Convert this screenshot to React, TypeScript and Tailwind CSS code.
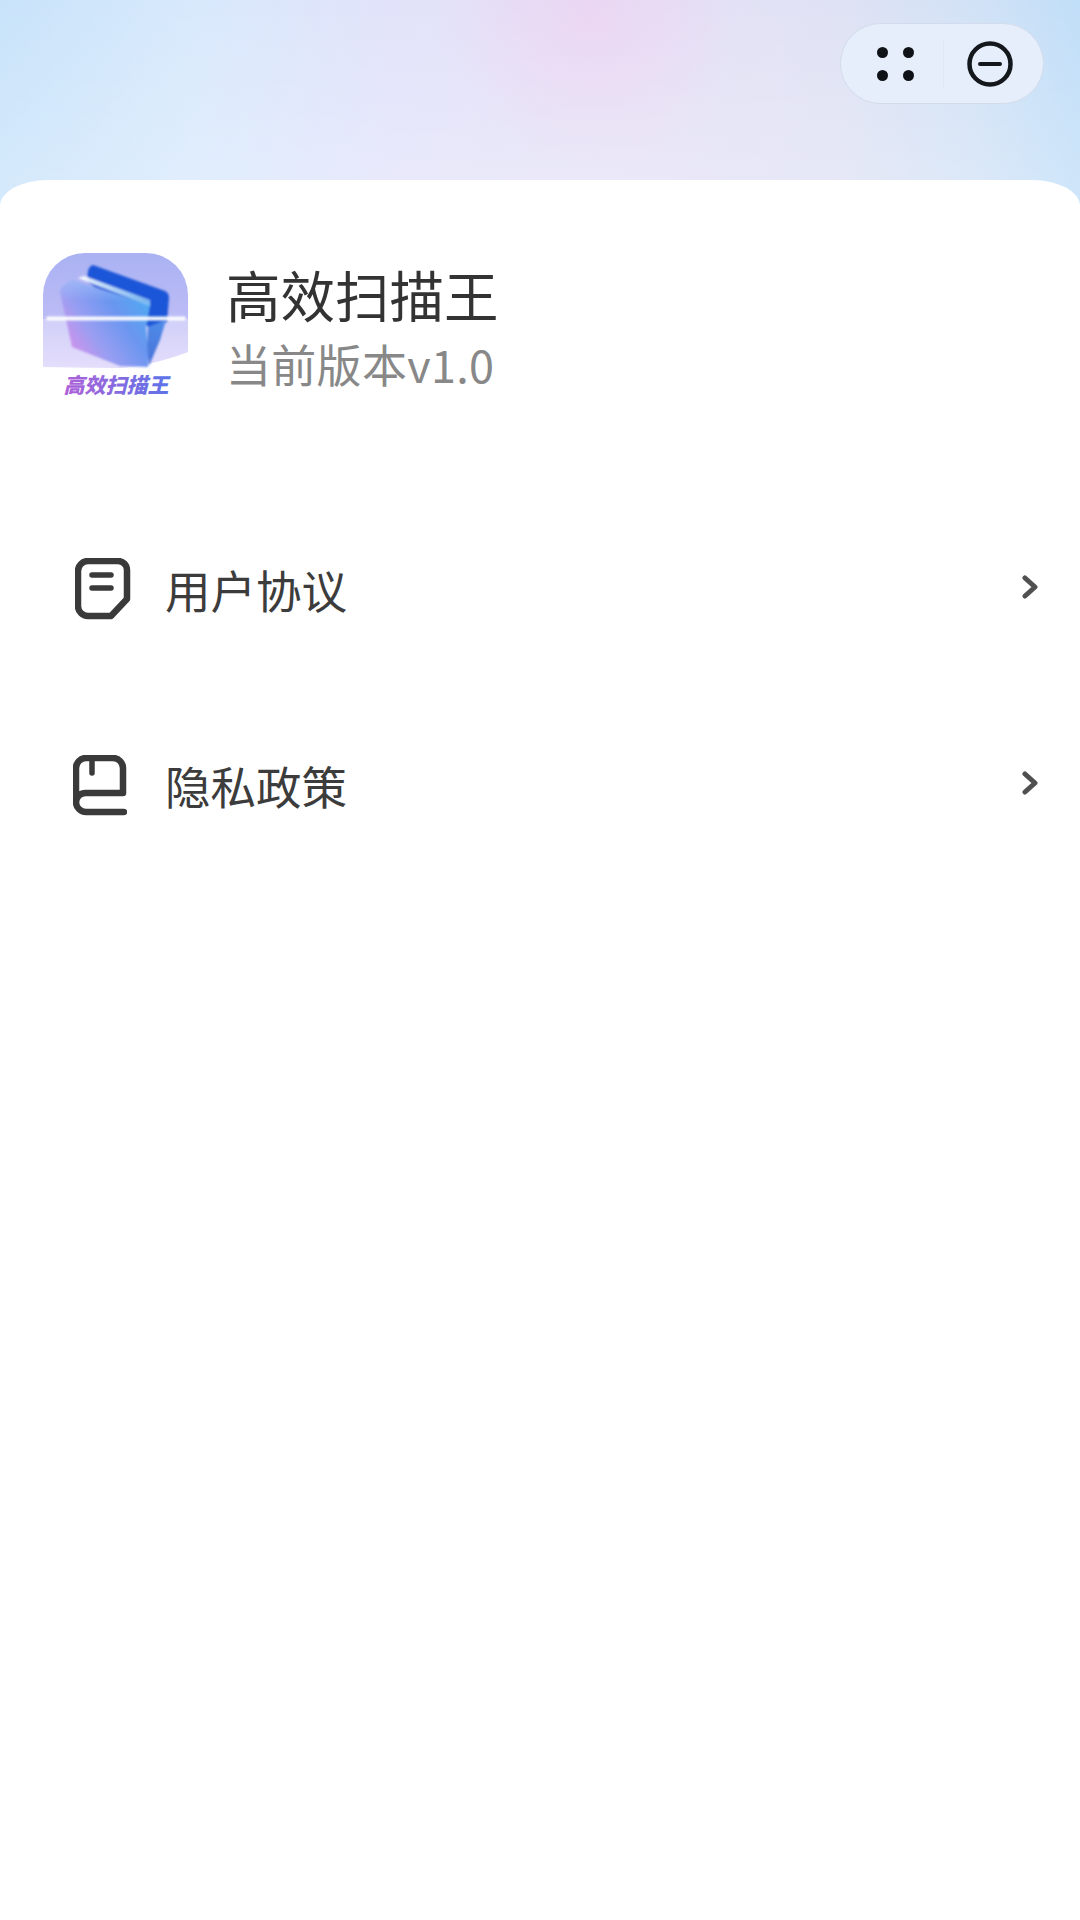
import React from 'react';

const AppLogo: React.FC = () => (
  <svg width="146" height="150" viewBox="43 253 146 150" className="shrink-0">
    <defs>
      <linearGradient id="logoBg" x1="0" y1="0" x2="0" y2="1">
        <stop offset="0" stopColor="#aab2f3" />
        <stop offset="0.6" stopColor="#bdbcf6" />
        <stop offset="1" stopColor="#d9d0fa" />
      </linearGradient>
      <linearGradient id="logoSheet" x1="0.05" y1="0.85" x2="0.95" y2="0.25">
        <stop offset="0" stopColor="#e08fea" />
        <stop offset="0.35" stopColor="#9a9ef2" />
        <stop offset="0.7" stopColor="#6a96f0" />
        <stop offset="1" stopColor="#52a8f2" />
      </linearGradient>
      <linearGradient id="logoSheetTop" x1="0" y1="0" x2="0" y2="1">
        <stop offset="0" stopColor="#a4bcf8" stopOpacity="0.85" />
        <stop offset="0.5" stopColor="#a4bcf8" stopOpacity="0" />
      </linearGradient>
      <linearGradient id="logoFlap" x1="0" y1="0" x2="0" y2="1">
        <stop offset="0" stopColor="#4f8ce8" />
        <stop offset="1" stopColor="#4a72d8" />
      </linearGradient>
      <linearGradient id="logoShine" x1="0" y1="0" x2="1" y2="0">
        <stop offset="0" stopColor="#ffffff" stopOpacity="0.95" />
        <stop offset="1" stopColor="#9fdcfb" stopOpacity="0.7" />
      </linearGradient>
      <linearGradient id="logoText" x1="0" y1="0" x2="1" y2="0">
        <stop offset="0" stopColor="#b061d8" />
        <stop offset="1" stopColor="#5b74e8" />
      </linearGradient>
      <filter id="soft" x="-10%" y="-10%" width="120%" height="120%">
        <feGaussianBlur stdDeviation="0.8" />
      </filter>
      <filter id="glow" x="-10%" y="-300%" width="120%" height="700%">
        <feGaussianBlur stdDeviation="1.2" />
      </filter>
    </defs>
    <path d="M43 367 V295 A42 42 0 0 1 85 253 H146 A42 42 0 0 1 188 295 V352 Q150 366 120 368 Z" fill="url(#logoBg)" />
    <path d="M43 319 H188 V352 Q150 366 120 368 L43 367 Z" fill="#ffffff" fillOpacity="0.3" />
    <g filter="url(#soft)">
      <path d="M93 265 L165 291 Q169 293 169 298 L167 322 L150 328 L88 282 Q86 267 93 265 Z" fill="#1f56d8" />
      <path d="M60 292 Q60 288 66 284 L72 280 L150 305 L146 328 L148 350 L148 367 L120 366 L72 347 Z" fill="url(#logoSheet)" />
      <path d="M60 292 Q60 288 66 284 L72 280 L150 305 L148 322 L66 316 Z" fill="url(#logoSheetTop)" />
      <path d="M78 278 L84 276 L150 300 L150 306 Z" fill="url(#logoShine)" />
      <path d="M148 327 L166 320 L160 340 L149 366 L147 346 Z" fill="url(#logoFlap)" />
    </g>
    <rect x="46" y="316.5" width="140" height="4" rx="2" fill="#ffffff" fillOpacity="0.95" filter="url(#glow)" />
    <text x="116" y="393" textAnchor="middle" fontSize="21" fontWeight="900" fontStyle="italic" fill="url(#logoText)" fontFamily="'Noto Sans CJK SC', sans-serif">
      高效扫描王
    </text>
  </svg>
);

const AgreementIcon: React.FC = () => (
  <svg width="56" height="62" viewBox="0 0 56 62" fill="none" stroke="#3a3a3a" strokeWidth="6.5" strokeLinecap="round" strokeLinejoin="round">
    <path d="M13 3 H43 A9 9 0 0 1 52 12 V41 L36 58 H13 A10 10 0 0 1 3 48 V13 A10 10 0 0 1 13 3 Z" />
    <path d="M17 17 H36 M17 30 H36" strokeWidth="5.5" />
  </svg>
);

const PrivacyIcon: React.FC = () => (
  <svg width="54" height="61" viewBox="0 0 54 61" fill="none" stroke="#3a3a3a" strokeWidth="6.5" strokeLinecap="round" strokeLinejoin="round" className="-ml-[2px]">
    <path d="M51 57 H13 A10 10 0 0 1 3 47 V13 A10 10 0 0 1 13 3 H40 A10 10 0 0 1 50 13 V38 H13 A9.5 9.5 0 0 0 3 47" />
    <path d="M19 3 V18" strokeWidth="5.5" />
  </svg>
);

const Chevron: React.FC = () => (
  <svg width="16" height="24" viewBox="0 0 16 24" fill="none" stroke="#505050" strokeWidth="5" strokeLinecap="round" strokeLinejoin="round" className="mb-[5px]">
    <path d="M3 3 L13 12 L3 21" />
  </svg>
);

const MENU_ITEMS = [
  { label: '用户协议', icon: <AgreementIcon /> },
  { label: '隐私政策', icon: <PrivacyIcon /> },
];

const App: React.FC = () => {
  return (
    <div className="relative w-[1080px] h-[1920px] overflow-hidden bg-white font-['Noto_Sans_CJK_SC','Noto_Sans',sans-serif]">
      {/* Capsule header */}
      <div className="h-[240px] pt-[23px] pr-[36px] flex justify-end items-start bg-[linear-gradient(180deg,rgba(255,255,255,0)_0%,rgba(255,255,255,0.22)_75%),radial-gradient(ellipse_150px_150px_at_590px_20px,#ebd6f2_0%,rgba(235,214,242,0)_100%),linear-gradient(90deg,#c8e3fa_0%,#d8e9fc_18%,#e2e3fa_36%,#e5e1f6_60%,#dfe2f4_78%,#d2e2f6_90%,#c0def8_100%)]">
        <div className="w-[204px] h-[81px] rounded-full bg-[#e5eefa] border border-[#d3dcec] flex items-center">
          <div className="w-[102px] flex justify-end pr-[28px]">
            <svg width="38" height="34" viewBox="0 0 38 34" fill="#0f1217">
              <circle cx="5.5" cy="5.5" r="5.5" />
              <circle cx="31.5" cy="5.5" r="5.5" />
              <circle cx="5.5" cy="28.5" r="5.5" />
              <circle cx="31.5" cy="28.5" r="5.5" />
            </svg>
          </div>
          <div className="w-px h-[50px] bg-[#dfe8f5]" />
          <div className="flex-1 flex justify-start pl-[23px]">
            <svg width="46" height="46" viewBox="0 0 46 46" fill="none" stroke="#14181d" strokeLinecap="round">
              <circle cx="23" cy="23" r="20.5" strokeWidth="4.5" />
              <path d="M13 23 H33" strokeWidth="4" />
            </svg>
          </div>
        </div>
      </div>

      {/* Card */}
      <div className="relative -mt-[60px] h-[1740px] bg-white rounded-t-[48px_26px] pt-[73px]">
        <div className="flex items-start pl-[43px] gap-[37px]">
          <AppLogo />
          <div className="flex flex-col gap-[10px] pt-[10px]">
            <div className="text-[54.5px] leading-[62px] text-[#333333]">高效扫描王</div>
            <div className="text-[45px] leading-[58px] tracking-[0.3px] text-[#888888]">当前版本v1.0</div>
          </div>
        </div>

        <div className="mt-[88px]">
          {MENU_ITEMS.map((item) => (
            <div key={item.label} className="h-[196px] flex items-center pl-[75px] pr-[42px]">
              <div className="w-[90px] flex items-center">{item.icon}</div>
              <div className="flex-1 text-[45.5px] leading-[60px] text-[#3c3c3c]">{item.label}</div>
              <Chevron />
            </div>
          ))}
        </div>
      </div>
    </div>
  );
};

export default App;
